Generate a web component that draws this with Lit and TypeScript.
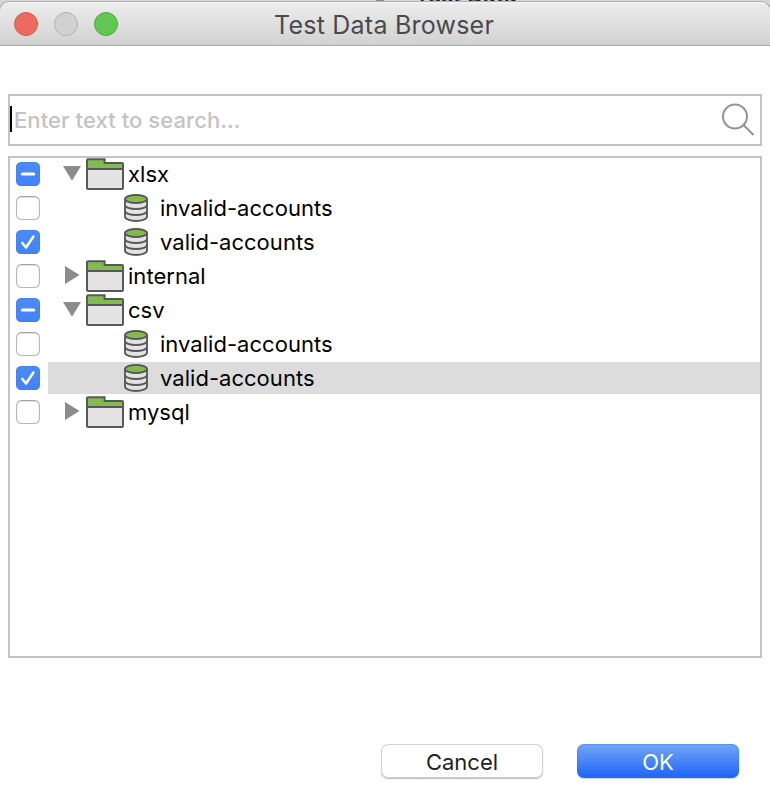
import { LitElement, html, css, svg, nothing } from "lit";
import { customElement, property } from "lit/decorators.js";
import { classMap } from "lit/directives/class-map.js";

type Check = "on" | "off" | "mixed";
interface Node {
  label: string;
  check: Check;
  kind: "open" | "closed" | "leaf";
  selected?: boolean;
}

const NODES: Node[] = [
  { label: "xlsx", check: "mixed", kind: "open" },
  { label: "invalid-accounts", check: "off", kind: "leaf" },
  { label: "valid-accounts", check: "on", kind: "leaf" },
  { label: "internal", check: "off", kind: "closed" },
  { label: "csv", check: "mixed", kind: "open" },
  { label: "invalid-accounts", check: "off", kind: "leaf" },
  { label: "valid-accounts", check: "on", kind: "leaf", selected: true },
  { label: "mysql", check: "off", kind: "closed" },
];

const folderIcon = html`<svg width="38" height="32" viewBox="0 0 38 32">
  <path d="M1 11V2.2Q1 1.2 2 1.2H18.6V5H36Q37 5 37 6V11Z" fill="#83bb4f" />
  <path d="M1 11H37V30Q37 31 36 31H2Q1 31 1 30Z" fill="#e4e2e3" />
  <path d="M1 11H37M1 2.2Q1 1.2 2 1.2H18.6V5H36Q37 5 37 6V30Q37 31 36 31H2Q1 31 1 30Z"
    fill="none" stroke="#58595b" stroke-width="2" />
</svg>`;

const databaseIcon = html`<svg width="24" height="28" viewBox="0 0 24 28">
  <path d="M1 5V22.6C1 25 6 27 12 27S23 25 23 22.6V5Z" fill="#e4e2e3" />
  <ellipse cx="12" cy="5" rx="11" ry="4" fill="#83bb4f" />
  <path d="M1 5C1 2.8 6 1 12 1S23 2.8 23 5S18 9 12 9S1 7.200 1 5V22.600C1 25 6 27 12 27S23 25 23 22.600V5M1 11C1 13.200 6 15 12 15S23 13.200 23 11M1 17C1 19.200 6 21 12 21S23 19.200 23 17"
    fill="none" stroke="#58595b" stroke-width="1.900" />
</svg>`;

@customElement("check-box")
export class CheckBox extends LitElement {
  @property() state: Check = "off";
  static styles = css`
    :host { display: block; width: 24px; height: 24px; }
    .box {
      box-sizing: border-box; width: 24px; height: 24px; border-radius: 5.5px;
      background: #fff; border: 1px solid #b8b8b8; border-top-color: #a4a4a4;
      box-shadow: inset 0 1px 1px #dedede, inset 0 0 1px #d0d0d0;
    }
    .filled {
      border: none;
      background: linear-gradient(#4b8af8, #4282f7);
      box-shadow: inset 0 0 0 0.5px #3f7ef0;
    }
    svg { display: block; }
  `;
  render() {
    const mark =
      this.state === "mixed"
        ? svg`<path d="M6.300 12H17.700" stroke-width="3.200" />`
        : svg`<path d="M6.300 13L10 17.400L17.400 6.600" stroke-width="2.600" />`;
    return html`<div class=${classMap({ box: true, filled: this.state !== "off" })}>
      ${this.state === "off"
        ? nothing
        : html`<svg width="24" height="24" fill="none" stroke="#fff" stroke-linecap="round" stroke-linejoin="round">${mark}</svg>`}
    </div>`;
  }
}

@customElement("tree-row")
export class TreeRow extends LitElement {
  @property({ attribute: false }) node!: Node;
  static styles = css`
    :host { display: block; height: 32px; }
    .row { display: flex; height: 32px; }
    check-box { margin: 4px 8px 0 6px; flex: none; }
    .cell { flex: 1; display: flex; align-items: center; }
    .selected { background: #dcdcdc; }
    .arrow { width: 18px; height: 32px; margin: 0 5px 0 15px; flex: none; }
    .folder, .leaf { display: flex; flex: none; }
    .folder { margin-right: 4px; }
    .leaf { margin: 0 12px 0 76px; }
    .label { font-size: 22px; line-height: 32px; white-space: pre; letter-spacing: 0.03px; }
    svg { display: block; }
  `;
  render() {
    const { label, check, kind, selected } = this.node;
    return html`<div class="row">
      <check-box state=${check}></check-box>
      <div class=${classMap({ cell: true, selected: !!selected })}>
        ${kind === "leaf"
          ? html`<span class="leaf">${databaseIcon}</span>`
          : html`<svg class="arrow" viewBox="0 0 18 32" fill="#8c8c8c">
                ${kind === "open" ? svg`<path d="M0 8H18L9 22.800Z" />` : svg`<path d="M2 6L16.500 15L2 24Z" />`}
              </svg>
              <span class="folder">${folderIcon}</span>`}
        <span class="label">${label}</span>
      </div>
    </div>`;
  }
}

@customElement("app-root")
export class AppRoot extends LitElement {
  static styles = css`
    :host {
      display: block; position: relative; width: 770px; height: 808px; overflow: hidden;
      background: #fff; color: #000; font-family: Inter, "Liberation Sans", sans-serif;
    }
    .behind { height: 46px; background: #d6d6d6; position: relative; overflow: hidden; }
    .behind-text {
      position: absolute; left: 415px; top: -17px; font-size: 22px; line-height: 24px;
      font-weight: 600; color: #222; white-space: pre; letter-spacing: 0.2px;
    }
    .behind-mark { position: absolute; left: 376px; top: 0; width: 8px; height: 2px; background: #8b8d96; }
    .titlebar {
      position: absolute; left: -1px; right: -1px; top: 1px; height: 45px; box-sizing: border-box;
      border: 1px solid #b0b0b0; border-bottom-color: #acacac; border-radius: 10px 10px 0 0;
      background: linear-gradient(#f8f8f8 0, #ececec 2px, #d2d2d2 42px, #c6c6c6 43px);
      display: flex; align-items: center;
    }
    .lights { display: flex; gap: 16px; padding-left: 14px; margin-top: 1px; }
    .light { width: 24px; height: 24px; box-sizing: border-box; border-radius: 50%; border: 1px solid; }
    .close { background: #ee6a5f; border-color: #d95950; }
    .minimize { background: #d1d1d1; border-color: #b3b3b3; }
    .zoom { background: #62c655; border-color: #52a943; }
    .title {
      margin-left: 156px; margin-top: 3px; font-size: 25px; line-height: 30px; color: #4a4a4a;
      white-space: pre; letter-spacing: 0.23px;
    }
    .content { padding: 48px 8px 0; }
    .search {
      box-sizing: border-box; height: 52px; border: 2px solid #c3c3c3;
      display: flex; align-items: center;
    }
    .caret { width: 2px; height: 26px; background: #000; margin-right: 2px; margin-top: -2px; }
    .placeholder { flex: 1; font-size: 22px; font-weight: 500; color: #c3c3c3; white-space: pre; letter-spacing: 0.08px; }
    .search svg { margin-right: 4px; }
    .tree {
      box-sizing: border-box; height: 502px; margin-top: 10px; border: 2px solid #c3c3c3;
      display: flex; flex-direction: column; gap: 2px;
    }
    .actions { display: flex; justify-content: flex-end; gap: 34px; padding: 86px 23px 0 0; }
    .button {
      box-sizing: border-box; width: 162px; height: 34px; border-radius: 7px; font-size: 22px;
      line-height: 36px; text-align: center; padding: 0; border: none; font-family: inherit;
    }
    .cancel { background: #fff; color: #222; box-shadow: inset 0 0 0 1px #d0d0d0, 0 1px 1px #b9b9b9; }
    .ok { color: #fff; background: linear-gradient(#73a5f7, #1d65f6); box-shadow: inset 0 0 0 1px #2f6fec55, 0 1px 1px #ccd4e4; }
  `;
  render() {
    return html`
      <div class="behind">
        <span class="behind-mark"></span>
        <span class="behind-text">Test Data</span>
        <div class="titlebar">
          <div class="lights">
            <span class="light close"></span><span class="light minimize"></span><span class="light zoom"></span>
          </div>
          <span class="title">Test Data Browser</span>
        </div>
      </div>
      <div class="content">
        <div class="search">
          <span class="caret"></span><span class="placeholder">Enter text to search...</span>
          <svg width="34" height="34" fill="none" stroke="#8e929a" stroke-width="2">
            <circle cx="13" cy="13.500" r="12" /><path d="M21.500 22L31.500 32" />
          </svg>
        </div>
        <div class="tree">${NODES.map((n) => html`<tree-row .node=${n}></tree-row>`)}</div>
        <div class="actions">
          <button class="button cancel">Cancel</button>
          <button class="button ok">OK</button>
        </div>
      </div>
    `;
  }
}
